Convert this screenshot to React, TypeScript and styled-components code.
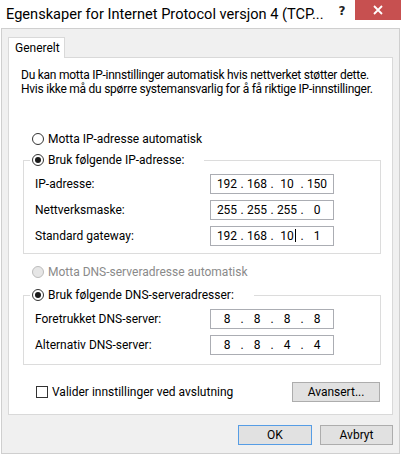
import React from "react";
import styled, { createGlobalStyle } from "styled-components";

const GlobalStyle = createGlobalStyle`
  html, body { margin: 0; padding: 0; background: #ffffff; }
  body { font-family: Roboto, "Noto Sans", sans-serif; font-size: 12px; color: #000; }
  * { box-sizing: border-box; }
`;

const Window = styled.div`
  width: 401px;
  height: 454px;
  background: #ffffff;
  display: flex;
  flex-direction: column;
  overflow: hidden;
`;

const TitleBar = styled.div`
  height: 28px;
  display: flex;
  align-items: flex-start;
  flex-shrink: 0;
`;

const Title = styled.div`
  flex: 1;
  padding: 4px 0 0 6px;
  font-size: 14.6px;
  line-height: 20px;
  color: #000;
  white-space: nowrap;
`;

const HelpButton = styled.div`
  width: 26px;
  height: 20px;
  display: flex;
  align-items: center;
  justify-content: center;
  font-family: "DejaVu Sans", sans-serif;
  font-weight: bold;
  font-size: 12px;
  color: #222;
  margin-top: 1px;
`;

const CloseButton = styled.div`
  width: 46px;
  height: 20px;
  background: #c75050;
  display: flex;
  align-items: center;
  justify-content: center;
`;

const Client = styled.div`
  flex: 1;
  margin: 0 1px;
  background: #f0f0f0;
  border: 1px solid #cfcfcf;
  padding: 8px 0 0 6px;
  display: flex;
  flex-direction: column;
`;

const TabStrip = styled.div`
  display: flex;
  position: relative;
  z-index: 1;
`;

const Tab = styled.div`
  width: 57px;
  height: 21px;
  background: #ffffff;
  border: 1px solid #d9d9d9;
  border-bottom: none;
  padding: 2px 0 0 6px;
  font-size: 12px;
  line-height: 16px;
`;

const Panel = styled.div`
  width: 385px;
  height: 358px;
  flex-shrink: 0;
  margin-top: -1px;
  background: #ffffff;
  border: 1px solid #d9d9d9;
  display: flex;
  flex-direction: column;
`;

const Description = styled.div`
  padding: 10px 0 0 12px;
  line-height: 14px;
  font-size: 12px;
  letter-spacing: -0.25px;
  white-space: nowrap;
`;

const RadioRow = styled.label<{ $top?: number; $disabled?: boolean }>`
  display: flex;
  align-items: center;
  gap: 4px;
  height: 14px;
  margin-top: ${(p) => p.$top ?? 0}px;
  margin-left: 23px;
  color: ${(p) => (p.$disabled ? "#8a8a8a" : "#000")};
  white-space: nowrap;
`;

const RadioCircle = styled.span<{ $checked?: boolean; $disabled?: boolean }>`
  width: 12px;
  height: 12px;
  border-radius: 50%;
  border: 1px solid ${(p) => (p.$disabled ? "#bcbcbc" : "#333333")};
  background: ${(p) => (p.$disabled ? "#e6e6e6" : "#ffffff")};
  display: flex;
  align-items: center;
  justify-content: center;
  flex-shrink: 0;
  &::after {
    content: "";
    display: ${(p) => (p.$checked ? "block" : "none")};
    width: 6px;
    height: 6px;
    border-radius: 50%;
    background: #1a1a1a;
  }
`;

const Group = styled.fieldset<{ $top: number; $bottom: number }>`
  margin: ${(p) => p.$top}px 0 0 14px;
  width: 358px;
  border: 1px solid #dcdcdc;
  padding: 7px 0 ${(p) => p.$bottom}px 11px;
  display: flex;
  flex-direction: column;
  gap: 6px;
  min-width: 0;
`;

const Legend = styled.legend`
  padding: 0 20px 0 2px;
  margin-left: -5px;
  display: flex;
  align-items: center;
  gap: 4px;
  height: 14px;
  white-space: nowrap;
`;

const FieldRow = styled.div`
  display: flex;
  align-items: center;
  height: 20px;
`;

const FieldLabel = styled.span`
  width: 175px;
`;

const IpBox = styled.div`
  width: 124px;
  height: 20px;
  border: 1px solid #abadb3;
  display: flex;
  align-items: center;
  padding-left: 3px;
  background: #fff;
`;

const Octet = styled.span`
  width: 26px;
  text-align: center;
  font-size: 12px;
`;

const Dot = styled.span`
  width: 4px;
  text-align: center;
`;

const Caret = styled.span`
  display: inline-block;
  width: 1px;
  height: 13px;
  background: #000;
  vertical-align: -2px;
  margin-left: 1px;
  margin-right: -2px;
`;

const BottomRow = styled.div`
  display: flex;
  align-items: center;
  justify-content: space-between;
  margin: 17px 12px 0 27px;
`;

const CheckLabel = styled.label`
  display: flex;
  align-items: center;
  gap: 4px;
`;

const CheckBox = styled.span`
  width: 12px;
  height: 12px;
  border: 1px solid #333;
  background: #fff;
`;

const Button = styled.div<{ $width: number; $default?: boolean }>`
  width: ${(p) => p.$width}px;
  height: 20px;
  background: #e1e1e1;
  border: 1px solid ${(p) => (p.$default ? "#569de5" : "#adadad")};
  display: flex;
  align-items: center;
  justify-content: center;
  font-size: 12px;
`;

const Footer = styled.div`
  display: flex;
  justify-content: flex-end;
  gap: 8px;
  width: 385px;
  margin-top: 10px;
`;

type IpProps = { parts: string[]; caretAfter?: number };

const IpField = ({ parts, caretAfter }: IpProps) => (
  <IpBox>
    {parts.map((p, i) => (
      <React.Fragment key={i}>
        {i > 0 && <Dot>.</Dot>}
        <Octet>
          {p}
          {caretAfter === i && <Caret />}
        </Octet>
      </React.Fragment>
    ))}
  </IpBox>
);

export default function App() {
  return (
    <>
      <GlobalStyle />
      <Window>
        <TitleBar>
          <Title>Egenskaper for Internet Protocol versjon 4 (TCP...</Title>
          <HelpButton>?</HelpButton>
          <CloseButton>
            <svg width="10" height="10" viewBox="0 0 10 10">
              <path d="M1 1 L9 9 M9 1 L1 9" stroke="#ffffff" strokeWidth="1.8" />
            </svg>
          </CloseButton>
        </TitleBar>
        <Client>
          <TabStrip>
            <Tab>Generelt</Tab>
          </TabStrip>
          <Panel>
            <Description>
              Du kan motta IP-innstillinger automatisk hvis nettverket støtter dette.
              <br />
              Hvis ikke må du spørre systemansvarlig for å få riktige IP-innstillinger.
            </Description>
            <RadioRow $top={36}>
              <RadioCircle />
              Motta IP-adresse automatisk
            </RadioRow>
            <Group $top={7} $bottom={7}>
              <Legend>
                <RadioCircle $checked />
                Bruk følgende IP-adresse:
              </Legend>
              <FieldRow>
                <FieldLabel>IP-adresse:</FieldLabel>
                <IpField parts={["192", "168", "10", "150"]} />
              </FieldRow>
              <FieldRow>
                <FieldLabel>Nettverksmaske:</FieldLabel>
                <IpField parts={["255", "255", "255", "0"]} />
              </FieldRow>
              <FieldRow>
                <FieldLabel>Standard gateway:</FieldLabel>
                <IpField parts={["192", "168", "10", "1"]} caretAfter={2} />
              </FieldRow>
            </Group>
            <RadioRow $top={11} $disabled>
              <RadioCircle $disabled />
              Motta DNS-serveradresse automatisk
            </RadioRow>
            <Group $top={9} $bottom={9}>
              <Legend>
                <RadioCircle $checked />
                Bruk følgende DNS-serveradresser:
              </Legend>
              <FieldRow>
                <FieldLabel>Foretrukket DNS-server:</FieldLabel>
                <IpField parts={["8", "8", "8", "8"]} />
              </FieldRow>
              <FieldRow>
                <FieldLabel>Alternativ DNS-server:</FieldLabel>
                <IpField parts={["8", "8", "4", "4"]} />
              </FieldRow>
            </Group>
            <BottomRow>
              <CheckLabel>
                <CheckBox />
                Valider innstillinger ved avslutning
              </CheckLabel>
              <Button $width={88}>Avansert...</Button>
            </BottomRow>
          </Panel>
          <Footer>
            <Button $width={74} $default>
              OK
            </Button>
            <Button $width={73}>Avbryt</Button>
          </Footer>
        </Client>
      </Window>
    </>
  );
}
